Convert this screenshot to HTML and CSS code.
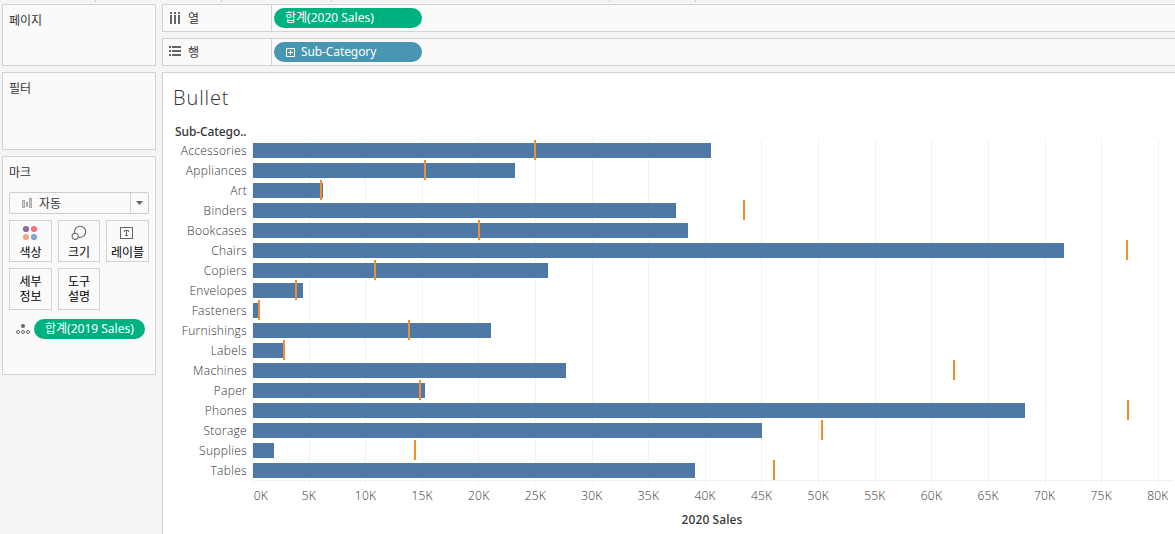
FILE: index.html
```html
<!DOCTYPE html>
<html lang="ko">
<head>
<meta charset="utf-8">
<title>Bullet</title>
<link rel="stylesheet" href="styles.css">
</head>
<body>
<div class="app">
  <div class="toolbar-edge"><i></i><i></i><i></i><i></i><i></i></div>
  <div class="workspace">
    <aside class="side">
      <section class="card pages"><h2>페이지</h2></section>
      <section class="card filters"><h2>필터</h2></section>
      <section class="card marks">
        <h2>마크</h2>
        <div class="select">
          <svg class="auto-icon" width="10" height="10" viewBox="0 0 10 10"><rect x="0.5" y="2.5" width="2" height="7" fill="#ccc" stroke="#aaa"/><rect x="4" y="4" width="2" height="5" fill="#aaa"/><rect x="7.5" y="0.5" width="2" height="9" fill="#ccc" stroke="#aaa"/></svg>
          <span>자동</span>
          <b class="drop"><svg width="7" height="4" viewBox="0 0 7 4"><path d="M0 0h7L3.5 4z" fill="#666"/></svg></b>
        </div>
        <div class="buttons">
          <div class="btn"><svg class="swatches" width="16" height="16" viewBox="0 0 16 16"><circle cx="4" cy="4" r="3.1" fill="#85709b"/><circle cx="12" cy="4" r="3.1" fill="#fb7180"/><circle cx="4" cy="12" r="3.1" fill="#f5a77c"/><circle cx="12" cy="12" r="3.1" fill="#83a5d0"/></svg><span>색상</span></div>
          <div class="btn"><svg width="16" height="16" viewBox="0 0 16 16" fill="none" stroke="#666" stroke-width="1.1"><path d="M3.6 8A5.6 5.6 0 1 1 7.6 12.2"/><circle cx="4.2" cy="11.3" r="3.1"/></svg><span>크기</span></div>
          <div class="btn"><svg width="16" height="16" viewBox="0 0 16 16" fill="none" stroke="#666"><rect x="1.5" y="2.5" width="12" height="11"/><path d="M5.5 7V5.5h4V7M7.5 5.5v5M6 10.5h3"/></svg><span>레이블</span></div>
          <div class="btn two">세부<br>정보</div>
          <div class="btn two">도구<br>설명</div>
        </div>
        <div class="mark-pill">
          <svg width="14" height="12" viewBox="0 0 14 12" fill="none" stroke="#666"><circle cx="7" cy="3" r="2" fill="#666" stroke="none"/><circle cx="2" cy="9" r="1.5"/><circle cx="7" cy="9" r="1.5"/><circle cx="12" cy="9" r="1.5"/></svg>
          <div class="pill green small"><span>합계(2019 Sales)</span></div>
        </div>
      </section>
    </aside>
    <main class="main">
      <div class="shelf">
        <div class="shelf-name"><svg width="12" height="12" viewBox="0 0 12 12" fill="#666"><path d="M1 0h2v2H1zM5 0h2v2H5zM9 0h2v2H9zM1 3h2v9H1zM5 3h2v9H5zM9 3h2v9H9z"/></svg><span>열</span></div>
        <div class="pill green"><span>합계(2020 Sales)</span></div>
      </div>
      <div class="shelf">
        <div class="shelf-name"><svg width="12" height="12" viewBox="0 0 12 12" fill="#666"><path d="M0 0h2v2H0zM3 0h9v2H3zM0 4h2v2H0zM3 4h9v2H3zM0 8h2v2H0zM3 8h9v2H3z"/></svg><span>행</span></div>
        <div class="pill blue"><svg width="9" height="9" viewBox="0 0 9 9" fill="none" stroke="#fff"><path d="M.5.5h8v8h-8zM2 4.5h5M4.5 2v5"/></svg><span>Sub-Category</span></div>
      </div>
      <section class="sheet">
        <h1>Bullet</h1>
        <div class="field">Sub-Catego..</div>
        <div class="chart">
          <div class="names">
            <div>Accessories</div><div>Appliances</div><div>Art</div><div>Binders</div><div>Bookcases</div><div>Chairs</div><div>Copiers</div><div>Envelopes</div><div>Fasteners</div><div>Furnishings</div><div>Labels</div><div>Machines</div><div>Paper</div><div>Phones</div><div>Storage</div><div>Supplies</div><div>Tables</div>
          </div>
          <div class="plot">
            <svg class="grid" width="921" height="345" viewBox="0 0 921 345" fill="#f2f2f2"><path d="M0 0h1v345H0zM57 0h1v345h-1zM113 0h1v345h-1zM170 0h1v345h-1zM226 0h1v345h-1zM283 0h1v345h-1zM340 0h1v345h-1zM396 0h1v345h-1zM453 0h1v345h-1zM509 0h1v345h-1zM566 0h1v345h-1zM623 0h1v345h-1zM679 0h1v345h-1zM736 0h1v345h-1zM793 0h1v345h-1zM849 0h1v345h-1zM906 0h1v345h-1zM0 340h921v1H0z"/></svg>
            <div class="row" style="--bar:458px;--ref:281px"></div>
            <div class="row" style="--bar:262px;--ref:171px"></div>
            <div class="row" style="--bar:70px;--ref:67px"></div>
            <div class="row" style="--bar:423px;--ref:490px"></div>
            <div class="row" style="--bar:435px;--ref:225px"></div>
            <div class="row" style="--bar:811px;--ref:873px"></div>
            <div class="row" style="--bar:295px;--ref:121px"></div>
            <div class="row" style="--bar:50px;--ref:42px"></div>
            <div class="row" style="--bar:6px;--ref:5px"></div>
            <div class="row" style="--bar:238px;--ref:155px"></div>
            <div class="row" style="--bar:31px;--ref:30px"></div>
            <div class="row" style="--bar:313px;--ref:700px"></div>
            <div class="row" style="--bar:172px;--ref:166px"></div>
            <div class="row" style="--bar:772px;--ref:874px"></div>
            <div class="row" style="--bar:509px;--ref:568px"></div>
            <div class="row" style="--bar:21px;--ref:161px"></div>
            <div class="row" style="--bar:442px;--ref:520px"></div>
          </div>
        </div>
        <div class="axis"><span class="zero">0K</span><span>5K</span><span>10K</span><span>15K</span><span>20K</span><span>25K</span><span>30K</span><span>35K</span><span>40K</span><span>45K</span><span>50K</span><span>55K</span><span>60K</span><span>65K</span><span>70K</span><span>75K</span><span>80K</span></div>
        <div class="axis-title">2020 Sales</div>
      </section>
    </main>
  </div>
</div>
</body>
</html>
```
FILE: styles.css
```css
* { box-sizing: border-box; }
body { margin: 0; font-family: "Noto Sans", "Noto Sans CJK KR", sans-serif; font-size: 12px; color: #333; }
svg { display: block; flex: none; }
.app { width: 1175px; height: 534px; background: #f5f5f5; overflow: hidden; }
.toolbar-edge { height: 4px; display: grid; grid-template-columns: 126px 110px 278px 86px 1px; padding-left: 95px; }
.toolbar-edge i { width: 1px; height: 2px; background: #ccc; }
.workspace { display: flex; gap: 6px; padding-left: 2px; }
.side { width: 154px; display: flex; flex-direction: column; gap: 6px; flex: none; }
.card { background: #fafafa; border: 1px solid #d2d2d2; padding: 6px 6px 0; }
.card h2 { margin: 0; font-size: 12px; font-weight: 400; line-height: 20px; }
.pages { height: 62px; }
.filters { height: 78px; }
.marks { height: 219px; }
.select { margin-top: 9px; width: 140px; height: 22px; border: 1px solid #ccc; border-radius: 2px; display: flex; align-items: center; padding-left: 12px; gap: 7px; line-height: 20px; }
.select span { padding-top: 2px; }
.drop { margin-left: auto; width: 18px; height: 20px; border-left: 1px solid #d2d2d2; display: flex; align-items: center; justify-content: center; }
.buttons { margin-top: 6px; display: grid; grid-template-columns: 43px 42px 43px; gap: 6px; }
.btn { height: 42px; border: 1px solid #d2d2d2; color: #000; padding: 4px 0 0; display: flex; flex-direction: column; align-items: center; line-height: 14px; font-size: 12px; white-space: nowrap; }
.btn svg { margin-right: 1px; }
.btn span { margin-top: 5px; }
.btn.two { display: block; text-align: center; padding-top: 5px; line-height: 15px; }
.mark-pill { margin-top: 9px; display: flex; align-items: center; padding-left: 7px; gap: 4px; }
.pill { width: 148px; height: 20px; border-radius: 10px; color: #fff; display: flex; align-items: center; gap: 6px; padding-left: 11px; line-height: 20px; white-space: nowrap; }
.pill.small { width: 111px; }
.green { background: #00b180; }
.blue { background: #4996b2; padding-left: 12px; letter-spacing: -.1px; }
.main { flex: 1; min-width: 0; display: flex; flex-direction: column; gap: 6px; }
.shelf { height: 28px; background: #fafafa; border: 1px solid #d2d2d2; border-right: 0; display: flex; align-items: center; gap: 2px; }
.shelf-name { width: 109px; height: 26px; border-right: 1px solid #d2d2d2; display: flex; align-items: center; gap: 7px; padding-left: 6px; }
.sheet { height: 463px; background: #fff; border: 1px solid #d2d2d2; border-width: 1px 0 0 1px; }
h1 { margin: 11px 0 0 10px; font-family: "Open Sans", sans-serif; font-size: 20px; line-height: 28px; font-weight: 300; letter-spacing: .9px; }
.field { margin: 11px 0 0 12px; line-height: 18px; height: 17px; font-weight: 500; color: #333; letter-spacing: -.1px; }
.chart { display: flex; }
.names { width: 84px; text-align: right; font-family: "Open Sans", sans-serif; font-weight: 300; color: #333; line-height: 20px; letter-spacing: .3px; margin-top: 1px; height: 344px; }
.plot { position: relative; width: 921px; height: 345px; margin-left: 5px; }
.grid { position: absolute; inset: 0; }
.row { position: relative; height: 20px; padding: 3px 0 0 1px; }
.row::before { content: ""; display: block; width: var(--bar); height: 15px; background: #4e79a7; }
.row::after { content: ""; position: absolute; top: 0; left: var(--ref); width: 2px; height: 20px; margin-left: 1px; background: #f28e2b; }
.axis { margin-left: 61px; display: grid; grid-template-columns: repeat(17, 56.6px); text-align: center; font-family: "Open Sans", sans-serif; font-weight: 300; color: #333; letter-spacing: .2px; line-height: 22px; height: 24px; }
.axis .zero { padding-left: 17px; }
.axis-title { margin-left: 89px; width: 920px; text-align: center; line-height: 22px; font-weight: 500; letter-spacing: .1px; color: #333; }
```
